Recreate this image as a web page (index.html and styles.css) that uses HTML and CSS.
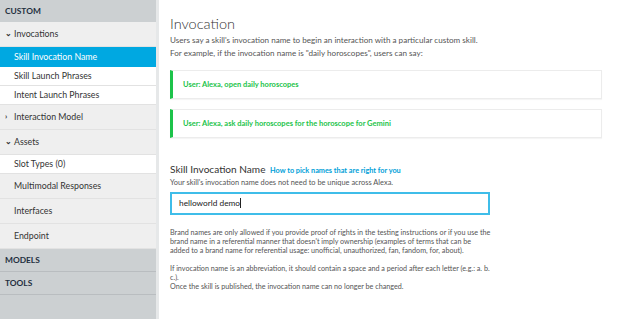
FILE: index.html
```html
<!DOCTYPE html>
<html lang="en">
<head>
  <meta charset="UTF-8">
  <title>Invocation</title>
  <link rel="stylesheet" href="styles.css">
</head>
<body>
  <div class="app">
    <nav class="sidebar">
      <div class="group-title">CUSTOM</div>
      <div class="nav-row section open"><span class="chev">&#8964;</span>Invocations</div>
      <div class="nav-row sub active">Skill Invocation Name</div>
      <div class="nav-row sub">Skill Launch Phrases</div>
      <div class="nav-row sub">Intent Launch Phrases</div>
      <div class="nav-row section"><span class="chev">&#8250;</span>Interaction Model</div>
      <div class="nav-row section open"><span class="chev">&#8964;</span>Assets</div>
      <div class="nav-row sub">Slot Types (0)</div>
      <div class="nav-row section plain">Multimodal Responses</div>
      <div class="nav-row section plain">Interfaces</div>
      <div class="nav-row section plain">Endpoint</div>
      <div class="group-title">MODELS</div>
      <div class="group-title">TOOLS</div>
    </nav>

    <main class="content">
      <h1>Invocation</h1>
      <p class="lead">Users say a skill's invocation name to begin an interaction with a particular custom skill.<br>
        For example, if the invocation name is "daily horoscopes", users can say:</p>

      <div class="utterance">User: Alexa, open daily horoscopes</div>
      <div class="utterance">User: Alexa, ask daily horoscopes for the horoscope for Gemini</div>

      <div class="field">
        <h2>Skill Invocation Name <a class="help">How to pick names that are right for you</a></h2>
        <p class="hint">Your skill's invocation name does not need to be unique across Alexa.</p>
        <div class="input"><span class="caret">helloworld demo</span></div>
      </div>

      <div class="notes">
        <p>Brand names are only allowed if you provide proof of rights in the testing instructions or if you use the brand name in a referential manner that doesn't imply ownership (examples of terms that can be added to a brand name for referential usage: unofficial, unauthorized, fan, fandom, for, about).</p>
        <p>If invocation name is an abbreviation, it should contain a space and a period after each letter (e.g.: a. b. c.).</p>
        <p>Once the skill is published, the invocation name can no longer be changed.</p>
      </div>
    </main>
  </div>
</body>
</html>
```

FILE: styles.css
```css
html, body {
  margin: 0; padding: 0;
  height: 100%;
  font-family: Lato, 'Liberation Sans', sans-serif;
  color: #333;
  background: #fff;
}
.app {
  display: flex;
  height: 100vh;
}
.sidebar {
  width: 156px;
  flex-shrink: 0;
  background: #ccd0d2;
  border-right: 3px solid #e6e8e9;
  font-size: 8.8px;
}
.group-title {
  height: 23px;
  line-height: 22px;
  padding-left: 5px;
  font-weight: 700;
  font-size: 8.4px;
  color: #232f3e;
  border-bottom: 1px solid #b9bdc0;
  box-sizing: border-box;
}
.group-title:first-child {
  height: 22px;
  border-bottom: none;
}
.nav-row {
  padding-left: 14px;
  position: relative;
  box-sizing: border-box;
  border-bottom: 1px solid #e2e2e2;
}
.nav-row.section {
  height: 25px;
  line-height: 23px;
  background: #efefef;
}
.nav-row.sub {
  height: 19px;
  line-height: 18px;
  background: #fff;
}
.nav-row.sub.active {
  height: 20px;
  line-height: 20px;
  background: #00a8e1;
  color: #fff;
  border-bottom: none;
}
.chev {
  position: absolute;
  left: 5px;
  top: 0;
  font-size: 8px;
  font-weight: 700;
}
.content {
  flex: 1;
  padding: 14px 28px 0 11px;
  font-size: 8.1px;
  color: #555;
}
h1 {
  margin: 0;
  font-size: 14.5px;
  font-weight: 300;
  color: #333;
  line-height: 20px;
}
.lead {
  margin: 0 0 10px;
  line-height: 13px;
}
.utterance {
  border: 1px solid #ececec;
  border-left: 3px solid #1cc34a;
  height: 29px;
  line-height: 27px;
  padding-left: 10px;
  margin-bottom: 10px;
  box-sizing: border-box;
  font-size: 7.5px;
  font-weight: 700;
  color: #1cc34a;
  box-shadow: 0 1px 1px rgba(0,0,0,0.04);
}
.field {
  margin-top: 25px;
}
h2 {
  margin: 0;
  font-size: 10.1px;
  font-weight: 400;
  color: #333;
  line-height: 13px;
}
.help {
  font-size: 7.3px;
  font-weight: 700;
  color: #00a0d8;
  margin-left: 2px;
}
.hint {
  margin: 0 0 4px;
  font-size: 7.4px;
  line-height: 11px;
}
.input {
  width: 320px;
  height: 23px;
  border: 2px solid #3fbde9;
  box-sizing: border-box;
  line-height: 19px;
  padding-left: 7px;
  font-size: 8.3px;
  color: #222;
}
.caret {
  border-right: 1px solid #222;
  padding-right: 0;
}
.notes {
  margin-top: 13px;
  max-width: 322px;
  font-size: 7.2px;
}
.notes p {
  margin: 0 0 9px;
  line-height: 9px;
}
.notes p:nth-child(2) {
  margin-bottom: 0;
}
```
